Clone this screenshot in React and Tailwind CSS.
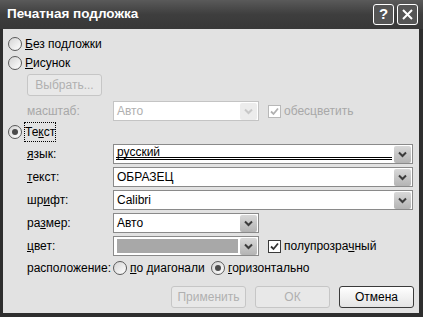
const F = { fontFamily: '"Liberation Sans", "DejaVu Sans", sans-serif' };

function Radio({ checked }) {
  return (
    <span className="relative inline-flex h-[14px] w-[14px] shrink-0 items-center justify-center rounded-full border border-[#5a5a5a] bg-gradient-to-br from-[#d4d4d4] to-white">
      {checked && <span className="h-[6px] w-[6px] rounded-full bg-[#4a4a4a]" />}
    </span>
  );
}

function Check({ disabled }) {
  return (
    <span
      className={`inline-flex h-[13px] w-[13px] shrink-0 items-center justify-center border bg-white ${
        disabled ? "border-[#b8b8b8]" : "border-[#3a3a3a]"
      }`}
    >
      <svg width="9" height="9" viewBox="0 0 9 9">
        <path
          d="M1 4.5 L3.5 7 L8 1.5"
          fill="none"
          stroke={disabled ? "#b0b0b0" : "#333"}
          strokeWidth="1.8"
        />
      </svg>
    </span>
  );
}

function Chevron({ disabled }) {
  return (
    <span
      className={`flex h-[17px] w-[17px] items-center justify-center rounded-[2px] ${
        disabled ? "bg-[#ececec]" : "bg-gradient-to-b from-[#d8d8d8] to-[#b4b4b4]"
      }`}
    >
      <svg width="9" height="7" viewBox="0 0 9 7">
        <path
          d="M1 1.5 L4.5 5 L8 1.5"
          fill="none"
          stroke={disabled ? "#c8c8c8" : "#3c3c3c"}
          strokeWidth="2"
        />
      </svg>
    </span>
  );
}

function Combo({ value, wide, disabled, swatch, focused }) {
  return (
    <div
      className={`relative flex h-[20px] shrink-0 items-center border bg-white pl-[3px] pr-[1px] ${
        wide ? "w-[300px]" : "w-[146px]"
      } ${disabled ? "border-[#c4c4c4]" : "border-[#8a8a8a]"}`}
    >
      {swatch ? (
        <span className="mr-[2px] h-[14px] flex-1 bg-[#a8a8a8]" />
      ) : (
        <span
          className={`flex-1 text-[12px] ${disabled ? "text-[#b0b0b0]" : "text-black"} ${
            focused ? "mt-[1px] self-start leading-none" : ""
          }`}
        >
          {value}
        </span>
      )}
      <Chevron disabled={disabled} />
      {focused && (
        <span className="absolute bottom-[3px] left-[2px] right-[20px] h-[3px] border-b border-t border-black" />
      )}
    </div>
  );
}

function Row({ label, children, disabled }) {
  return (
    <div className="flex h-[20px] items-center">
      <span
        className={`w-[110px] shrink-0 pl-[24px] ${disabled ? "text-[#a8a8a8]" : "text-black"}`}
      >
        {label}
      </span>
      {children}
    </div>
  );
}

function Btn({ children, disabled }) {
  return (
    <div
      className={`flex h-[22px] w-[75px] items-center justify-center rounded-[3px] border ${
        disabled
          ? "border-[#c6c6c6] bg-[#e8e8e8] text-[#b0b0b0]"
          : "border-[#3a3a3a] bg-gradient-to-b from-white to-[#e4e4e4] text-black"
      }`}
    >
      {children}
    </div>
  );
}

export default function App() {
  return (
    <div className="h-[317px] w-[423px] bg-[#2e2e2e]" style={F}>
      <div className="flex h-[29px] items-center bg-gradient-to-b from-[#5a5a5a] via-[#3e3e3e] to-[#383838] pl-[7px] pr-[5px]">
        <span className="flex-1 text-[13.5px] font-bold text-white">Печатная подложка</span>
        <div className="flex gap-[3px]">
          <span className="flex h-[21px] w-[21px] items-center justify-center rounded-[3px] border border-white bg-[#555] text-[15px] font-bold text-white">
            ?
          </span>
          <span className="flex h-[21px] w-[21px] items-center justify-center rounded-[3px] border border-white bg-[#555]">
            <svg width="11" height="11" viewBox="0 0 11 11">
              <path d="M1 1 L10 10 M10 1 L1 10" stroke="white" strokeWidth="2" />
            </svg>
          </span>
        </div>
      </div>
      <div className="ml-[3px] mr-[4px] flex h-[284px] flex-col bg-[#e2e2e2] pt-[6px] text-[12px]">
        <div className="flex h-[18px] items-center gap-[3px] pl-[5px]">
          <Radio />
          <span>
            <u>Б</u>ез подложки
          </span>
        </div>
        <div className="mt-px flex h-[18px] items-center gap-[3px] pl-[5px]">
          <Radio />
          <span>
            <u>Р</u>исунок
          </span>
        </div>
        <div className="mt-[2px] pl-[24px]">
          <Btn disabled>Выбрать...</Btn>
        </div>
        <div className="mt-[5px]">
          <Row label="масштаб:" disabled>
            <Combo value="Авто" disabled />
            <span className="ml-[9px] flex items-center gap-[3px] text-[#a8a8a8]">
              <Check disabled />
              обесцветить
            </span>
          </Row>
        </div>
        <div className="mt-[2px] flex h-[18px] items-center gap-[3px] pl-[5px]">
          <Radio checked />
          <span className="outline-1 outline-dotted outline-black">
            Те<u>к</u>ст
          </span>
        </div>
        <div className="mt-[3px] flex flex-col gap-[3px]">
          <Row label={<><u>я</u>зык:</>}>
            <Combo value="русский" wide focused />
          </Row>
          <Row label={<><u>т</u>екст:</>}>
            <Combo value="ОБРАЗЕЦ" wide />
          </Row>
          <Row label={<>шр<u>и</u>фт:</>}>
            <Combo value="Calibri" wide />
          </Row>
          <Row label={<>ра<u>з</u>мер:</>}>
            <Combo value="Авто" />
          </Row>
          <Row label={<><u>ц</u>вет:</>}>
            <Combo swatch />
            <span className="ml-[9px] flex items-center gap-[3px]">
              <Check />
              <span>
                полупрозра<u>ч</u>ный
              </span>
            </span>
          </Row>
        </div>
        <div className="mt-[3px] flex h-[18px] items-center">
          <span className="w-[110px] shrink-0 pl-[24px]">расположение:</span>
          <span className="flex w-[98px] shrink-0 items-center gap-[3px]">
            <Radio />
            <span>
              <u>п</u>о диагонали
            </span>
          </span>
          <span className="flex items-center gap-[3px]">
            <Radio checked />
            <span>
              <u>г</u>оризонтально
            </span>
          </span>
        </div>
        <div className="mt-[9px] flex justify-end gap-[9px] pr-[5px]">
          <Btn disabled>Применить</Btn>
          <Btn disabled>ОК</Btn>
          <Btn>Отмена</Btn>
        </div>
      </div>
    </div>
  );
}
